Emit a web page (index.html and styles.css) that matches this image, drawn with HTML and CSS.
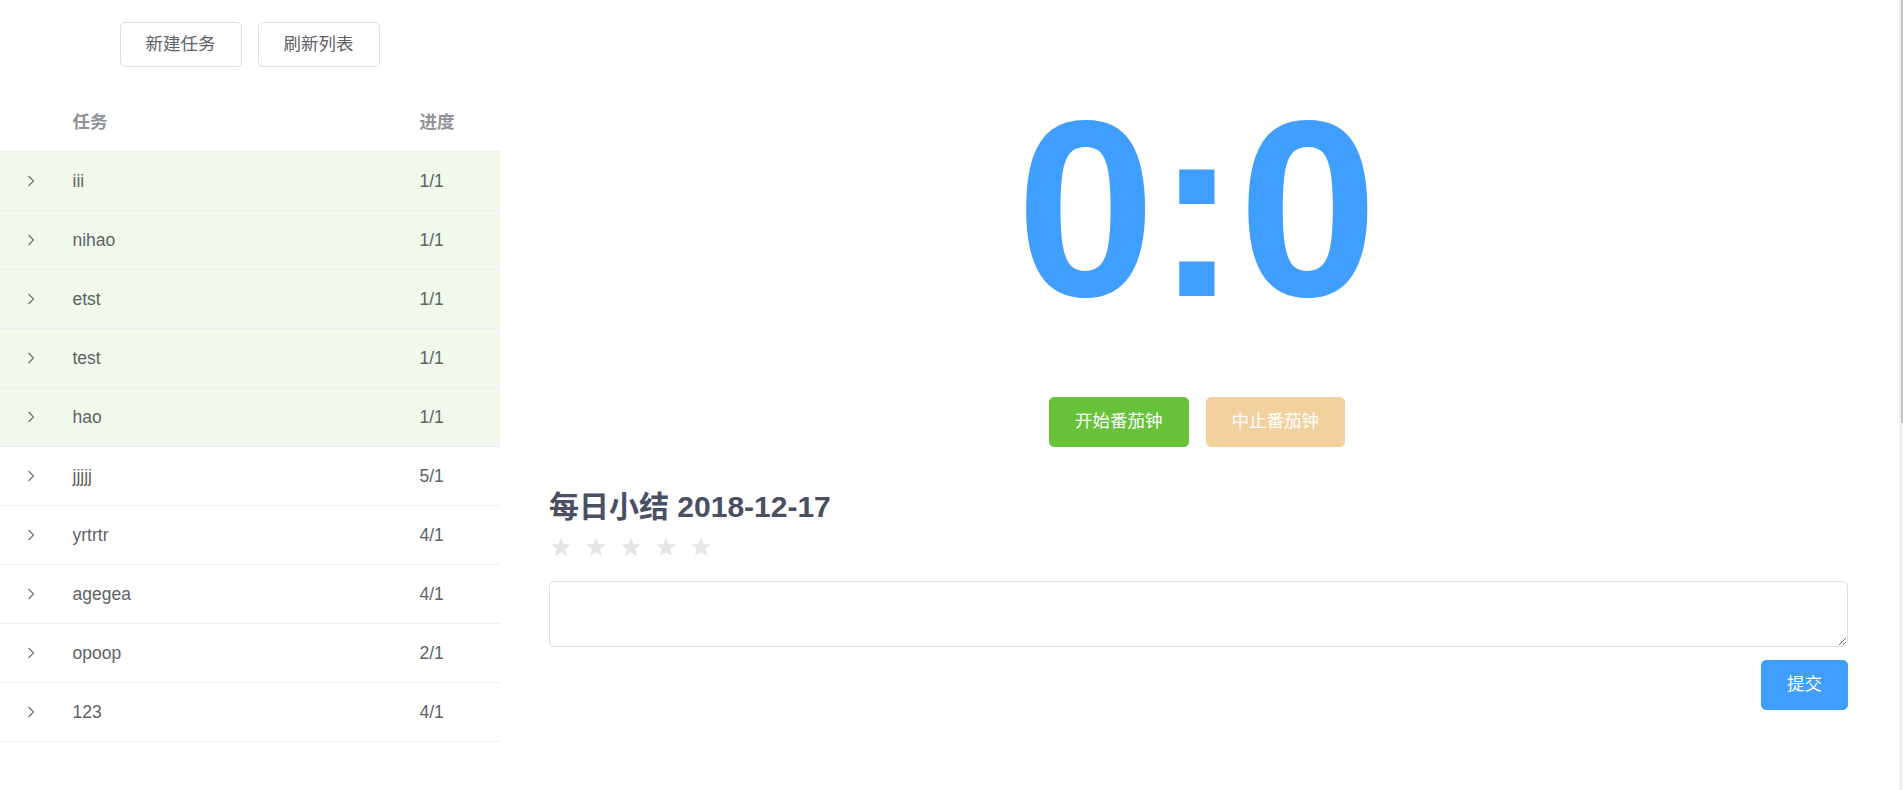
FILE: index.html
```html
<!DOCTYPE html>
<html lang="zh">
<head>
<meta charset="utf-8">
<title>番茄钟</title>
<link rel="stylesheet" href="styles.css">
</head>
<body>
<div class="page">
  <aside class="left">
    <div class="toolbar">
      <button class="btn">新建任务</button>
      <button class="btn">刷新列表</button>
    </div>
    <div class="tasks">
      <div class="row head">
        <div class="cell"></div>
        <div class="cell">任务</div>
        <div class="cell">进度</div>
      </div>
      <div class="row done"><div class="cell arrow"><svg width="8" height="12" viewBox="0 0 8 12"><path d="M1.5 1 L6.5 6 L1.5 11"/></svg></div><div class="cell">iii</div><div class="cell">1/1</div></div>
      <div class="row done"><div class="cell arrow"><svg width="8" height="12" viewBox="0 0 8 12"><path d="M1.5 1 L6.5 6 L1.5 11"/></svg></div><div class="cell">nihao</div><div class="cell">1/1</div></div>
      <div class="row done"><div class="cell arrow"><svg width="8" height="12" viewBox="0 0 8 12"><path d="M1.5 1 L6.5 6 L1.5 11"/></svg></div><div class="cell">etst</div><div class="cell">1/1</div></div>
      <div class="row done"><div class="cell arrow"><svg width="8" height="12" viewBox="0 0 8 12"><path d="M1.5 1 L6.5 6 L1.5 11"/></svg></div><div class="cell">test</div><div class="cell">1/1</div></div>
      <div class="row done"><div class="cell arrow"><svg width="8" height="12" viewBox="0 0 8 12"><path d="M1.5 1 L6.5 6 L1.5 11"/></svg></div><div class="cell">hao</div><div class="cell">1/1</div></div>
      <div class="row"><div class="cell arrow"><svg width="8" height="12" viewBox="0 0 8 12"><path d="M1.5 1 L6.5 6 L1.5 11"/></svg></div><div class="cell">jjjjj</div><div class="cell">5/1</div></div>
      <div class="row"><div class="cell arrow"><svg width="8" height="12" viewBox="0 0 8 12"><path d="M1.5 1 L6.5 6 L1.5 11"/></svg></div><div class="cell">yrtrtr</div><div class="cell">4/1</div></div>
      <div class="row"><div class="cell arrow"><svg width="8" height="12" viewBox="0 0 8 12"><path d="M1.5 1 L6.5 6 L1.5 11"/></svg></div><div class="cell">agegea</div><div class="cell">4/1</div></div>
      <div class="row"><div class="cell arrow"><svg width="8" height="12" viewBox="0 0 8 12"><path d="M1.5 1 L6.5 6 L1.5 11"/></svg></div><div class="cell">opoop</div><div class="cell">2/1</div></div>
      <div class="row"><div class="cell arrow"><svg width="8" height="12" viewBox="0 0 8 12"><path d="M1.5 1 L6.5 6 L1.5 11"/></svg></div><div class="cell">123</div><div class="cell">4/1</div></div>
    </div>
  </aside>
  <main class="right">
    <div class="timer">0:0</div>
    <div class="controls">
      <button class="btn btn-solid btn-success">开始番茄钟</button>
      <button class="btn btn-solid btn-warning-disabled">中止番茄钟</button>
    </div>
    <h2 class="summary-title">每日小结 2018-12-17</h2>
    <div class="rate">
      <svg class="star" viewBox="0 0 24 24"><path d="M12 1.5 L14.9 8.6 L22.6 9.2 L16.7 14.2 L18.6 21.8 L12 17.7 L5.4 21.8 L7.3 14.2 L1.4 9.2 L9.1 8.6 Z"/></svg>
      <svg class="star" viewBox="0 0 24 24"><path d="M12 1.5 L14.9 8.6 L22.6 9.2 L16.7 14.2 L18.6 21.8 L12 17.7 L5.4 21.8 L7.3 14.2 L1.4 9.2 L9.1 8.6 Z"/></svg>
      <svg class="star" viewBox="0 0 24 24"><path d="M12 1.5 L14.9 8.6 L22.6 9.2 L16.7 14.2 L18.6 21.8 L12 17.7 L5.4 21.8 L7.3 14.2 L1.4 9.2 L9.1 8.6 Z"/></svg>
      <svg class="star" viewBox="0 0 24 24"><path d="M12 1.5 L14.9 8.6 L22.6 9.2 L16.7 14.2 L18.6 21.8 L12 17.7 L5.4 21.8 L7.3 14.2 L1.4 9.2 L9.1 8.6 Z"/></svg>
      <svg class="star" viewBox="0 0 24 24"><path d="M12 1.5 L14.9 8.6 L22.6 9.2 L16.7 14.2 L18.6 21.8 L12 17.7 L5.4 21.8 L7.3 14.2 L1.4 9.2 L9.1 8.6 Z"/></svg>
    </div>
    <textarea class="summary-input"></textarea>
    <div class="submit-row">
      <button class="btn btn-solid btn-primary">提交</button>
    </div>
  </main>
  <div class="scrollbar"><div class="thumb"></div></div>
</div>
</body>
</html>
```
FILE: styles.css
```css
* { box-sizing: border-box; }
html, body {
  margin: 0;
  padding: 0;
  height: 790px;
  overflow: hidden;
  background: #fff;
}
body {
  font-family: "Liberation Sans", Arial, "Noto Sans CJK SC", sans-serif;
  font-size: 17.5px;
  color: #606266;
}
.page {
  display: flex;
  height: 790px;
}
.left {
  width: 500px;
  flex: 0 0 500px;
}
.toolbar {
  display: flex;
  justify-content: center;
  gap: 16px;
  padding-top: 22px;
  padding-right: 1px;
  margin-bottom: 26px;
}
.btn {
  height: 45px;
  padding: 0 25px;
  border: 1px solid #dcdfe6;
  border-radius: 5px;
  background: #fff;
  color: #606266;
  font-family: "Liberation Sans", Arial, "Noto Sans CJK SC", sans-serif;
  font-size: 17.5px;
  line-height: 1;
  cursor: pointer;
}
.btn-solid {
  height: 50px;
  color: #fff;
}
.btn-success { background: #67c23a; border-color: #67c23a; }
.btn-warning-disabled { background: #f3d19e; border-color: #f3d19e; }
.btn-primary { background: #409eff; border-color: #409eff; }

.tasks { width: 500px; }
.row {
  display: grid;
  grid-template-columns: 60px 347px 1fr;
  height: 59px;
  border-bottom: 1px solid #ebeef5;
  align-items: center;
}
.row.done { background: #f0f9eb; }
.cell {
  padding: 0 12.5px;
  line-height: 24px;
  white-space: nowrap;
}
.head .cell {
  color: #909399;
  font-weight: bold;
}
.arrow {
  display: flex;
  justify-content: center;
  align-items: center;
  padding: 0 0 0 2px;
}
.arrow svg path {
  fill: none;
  stroke: #6b6e73;
  stroke-width: 1.1;
}

.right {
  flex: 1;
  padding: 85px 51px 0 49px;
  display: flex;
  flex-direction: column;
}
.timer {
  font-family: "Liberation Sans", Arial, sans-serif;
  font-weight: bold;
  font-size: 250px;
  line-height: 250px;
  height: 250px;
  color: #409eff;
  text-align: center;
  margin-left: -3px;
}
.controls {
  display: flex;
  justify-content: center;
  gap: 17px;
  margin-top: 62px;
  padding-right: 3px;
}
.summary-title {
  margin: 42px 0 0 0;
  font-size: 30px;
  line-height: 36px;
  font-weight: bold;
  color: #4a5064;
}
.rate {
  display: flex;
  gap: 13px;
  margin-top: 11px;
  padding-left: 1px;
  height: 22px;
}
.star {
  width: 22px;
  height: 22px;
  fill: #e6e6e6;
}
.summary-input {
  display: block;
  width: 100%;
  height: 66px;
  margin-top: 23px;
  border: 1px solid #dcdfe6;
  border-radius: 5px;
  padding: 6px 19px;
  font-family: "Liberation Sans", Arial, "Noto Sans CJK SC", sans-serif;
  font-size: 17.5px;
  color: #606266;
  resize: vertical;
  outline: none;
}
.submit-row {
  display: flex;
  justify-content: flex-end;
  margin-top: 13px;
}
.scrollbar {
  flex: 0 0 4px;
  width: 4px;
  background: #f1f1f1;
  display: flex;
  justify-content: flex-end;
}
.thumb {
  width: 2px;
  height: 423px;
  background: #c1c1c1;
}
```
